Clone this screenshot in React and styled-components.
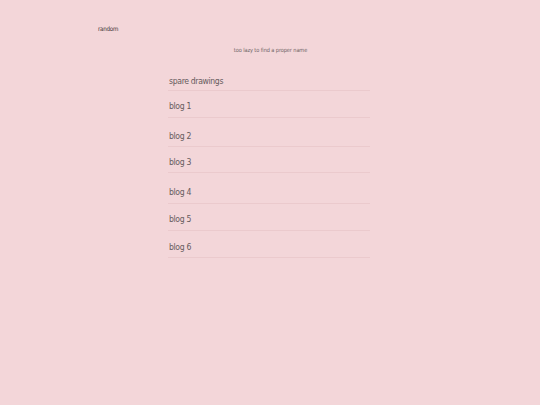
import React from 'react'
import styled, { createGlobalStyle } from 'styled-components'

const GlobalStyle = createGlobalStyle`
  html, body {
    margin: 0;
    padding: 0;
    background: #f3d6d9;
    font-family: "DejaVu Sans Condensed", "DejaVu Sans", sans-serif;
  }
`

const posts = [
  { title: 'spare drawings', top: 7, height: 22 },
  { title: 'blog 1', top: 10, height: 27 },
  { title: 'blog 2', top: 13, height: 29 },
  { title: 'blog 3', top: 10, height: 26 },
  { title: 'blog 4', top: 14, height: 31 },
  { title: 'blog 5', top: 10, height: 27 },
  { title: 'blog 6', top: 11, height: 27 },
]

const App = () => {
  return (
    <Page>
      <GlobalStyle />
      <Brand>random</Brand>
      <Tagline>too lazy to find a proper name</Tagline>
      <List>
        {posts.map((p) => (
          <Row key={p.title} $h={p.height} $top={p.top}>
            {p.title}
          </Row>
        ))}
      </List>
    </Page>
  )
}

const Page = styled.div`
  width: 540px;
  height: 405px;
  padding-top: 24px;
  box-sizing: border-box;
`

const Brand = styled.div`
  margin-left: 98px;
  font-size: 6.2px;
  letter-spacing: -0.25px;
  color: #3a3233;
  line-height: 10px;
`

const Tagline = styled.div`
  margin-top: 11px;
  text-align: center;
  font-size: 5.6px;
  letter-spacing: -0.1px;
  color: #6f6566;
  line-height: 10px;
  padding-left: 1px;
`

const List = styled.div`
  width: 202px;
  margin: 14px 0 0 168px;
  display: flex;
  flex-direction: column;
`

const Row = styled.div`
  height: ${(p) => p.$h}px;
  box-sizing: border-box;
  padding: ${(p) => p.$top}px 0 0 1px;
  border-bottom: 1px solid #ebcacd;
  font-size: 8.6px;
  letter-spacing: -0.35px;
  line-height: 10px;
  color: #665b5d;
`

export default App
